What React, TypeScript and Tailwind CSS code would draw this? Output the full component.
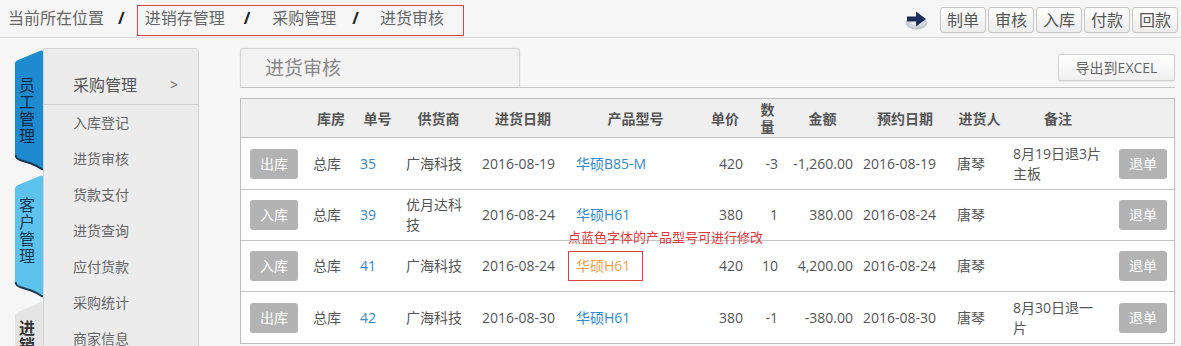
import React from "react";

type Row = {
  act: string;
  no: string;
  vendor: string;
  date: string;
  model: string;
  price: string;
  qty: string;
  amount: string;
  due: string;
  who: string;
  note: string;
  marked?: boolean;
};

const rows: Row[] = [
  { act: "出库", no: "35", vendor: "广海科技", date: "2016-08-19", model: "华硕B85-M", price: "420", qty: "-3", amount: "-1,260.00", due: "2016-08-19", who: "唐琴", note: "8月19日退3片主板" },
  { act: "入库", no: "39", vendor: "优月达科技", date: "2016-08-24", model: "华硕H61", price: "380", qty: "1", amount: "380.00", due: "2016-08-24", who: "唐琴", note: "" },
  { act: "入库", no: "41", vendor: "广海科技", date: "2016-08-24", model: "华硕H61", price: "420", qty: "10", amount: "4,200.00", due: "2016-08-24", who: "唐琴", note: "", marked: true },
  { act: "出库", no: "42", vendor: "广海科技", date: "2016-08-30", model: "华硕H61", price: "380", qty: "-1", amount: "-380.00", due: "2016-08-30", who: "唐琴", note: "8月30日退一片" },
];

const menuItems = ["入库登记", "进货审核", "货款支付", "进货查询", "应付货款", "采购统计", "商家信息"];
const quickButtons = ["制单", "审核", "入库", "付款", "回款"];

const cols =
  "grid grid-cols-[64px_47px_46px_76px_94px_132px_50px_35px_75px_88px_57px_103px_66px]";

function ArrowIcon() {
  return (
    <svg width="23" height="21" viewBox="0 0 23 21" aria-hidden="true">
      <defs>
        <radialGradient id="disk" cx="50%" cy="40%" r="60%">
          <stop offset="0%" stopColor="#ffffff" />
          <stop offset="100%" stopColor="#b9bec8" />
        </radialGradient>
      </defs>
      <ellipse cx="11.5" cy="14" rx="11" ry="6.5" fill="url(#disk)" />
      <path d="M2 7.5h9V2.5l10 7.5-10 7.5v-5H2z" fill="#1b2e5c" />
    </svg>
  );
}

function SideTab({
  label,
  fill,
  edge,
  text,
  height,
  pt,
  bold,
}: {
  label: string;
  fill: string;
  edge: string;
  text: string;
  height: number;
  pt: string;
  bold?: boolean;
}) {
  const h = height;
  return (
    <div className="relative w-[28px]" style={{ height: h }}>
      <svg className="absolute inset-0" width="28" height={h} viewBox={`0 0 28 ${h}`} aria-hidden="true">
        <path
          d={`M0 14 Q0 11 3 10 L26 0.6 Q28 0 28 2 V${h} Q24 ${h - 4} 16 ${h - 7} L4 ${h - 11} Q0 ${h - 12} 0 ${h - 15} Z`}
          fill={fill}
        />
        <path
          d={`M0.5 ${h - 15} Q1 ${h - 11} 5 ${h - 10} L16 ${h - 6.5} Q24 ${h - 3.5} 28 ${h}`}
          stroke={edge}
          strokeWidth="2"
          fill="none"
        />
      </svg>
      <div
        className={`relative flex flex-col pl-[4px] text-[16px] leading-[17px] ${pt} ${bold ? "font-bold" : ""}`}
        style={{ color: text }}
      >
        {label.split("").map((c, i) => (
          <span key={i}>{c}</span>
        ))}
      </div>
    </div>
  );
}

export default function App() {
  return (
    <div className="h-[346px] w-[1181px] overflow-hidden bg-[#f6f6f6] font-['Open_Sans','Noto_Sans_CJK_SC',sans-serif] text-[#555]">
      {/* top bar */}
      <div className="flex h-[38px] items-start justify-between border-b border-[#d8d8d8] pl-[8px] pr-[3px]">
        <div className="flex items-start text-[16px] leading-[22px] text-[#666]">
          <span className="mt-[7px]">当前所在位置</span>
          <span className="mt-[7px] ml-[14px] mr-[12px] font-bold text-[#222]">/</span>
          <div className="mt-[5px] flex h-[31px] items-start border border-[#d64545] pt-[1px] pl-[7px] pr-[19px]">
            <span>进销存管理</span>
            <span className="ml-[19px] mr-[22px] font-bold text-[#222]">/</span>
            <span>采购管理</span>
            <span className="ml-[16px] mr-[21px] font-bold text-[#222]">/</span>
            <span>进货审核</span>
          </div>
        </div>
        <div className="flex items-start">
          <div className="mt-[9px] mr-[12px]">
            <ArrowIcon />
          </div>
          <div className="mt-[7px] flex gap-[2px]">
            {quickButtons.map((b) => (
              <button
                key={b}
                type="button"
                className="h-[26px] rounded-[3px] border border-[#c6c6c6] bg-gradient-to-b from-white to-[#ececec] px-[6px] text-[16px] leading-[24px] text-[#555]"
              >
                {b}
              </button>
            ))}
          </div>
        </div>
      </div>

      <div className="flex items-start">
        {/* sidebar */}
        <div className="flex pl-[15px] pt-[10px]">
          <div className="mt-[2px] flex flex-col gap-[5px]">
            <SideTab label="员工管理" fill="#1d8bcd" edge="#16324f" text="#0c2947" height={120} pt="pt-[27px]" />
            <SideTab label="客户管理" fill="#5dc3ec" edge="#1d3a52" text="#163a58" height={122} pt="pt-[22px]" />
            <SideTab label="进销" fill="#e4e4e4" edge="#999" text="#333" height={70} pt="pt-[18px]" bold />
          </div>
          <div className="h-[300px] w-[156px] rounded-tr-[4px] border border-[#d2d2d2] bg-[#ececec]">
            <div className="flex h-[56px] items-start justify-between border-b border-[#d0d0d0] pt-[24px] pl-[29px] pr-[20px] text-[16px] leading-[24px] text-[#555]">
              <span>采购管理</span>
              <span className="text-[14px] text-[#666]">&gt;</span>
            </div>
            <div className="flex flex-col">
              {menuItems.map((m) => (
                <div key={m} className="flex h-[36px] items-center pl-[29px] text-[14px] leading-[20px] text-[#666]">
                  {m}
                </div>
              ))}
            </div>
          </div>
        </div>

        {/* main */}
        <div className="ml-[41px] w-[935px] pt-[10px]">
          <div className="flex h-[40px] items-start justify-between border-b border-[#c8c8c8]">
            <div className="flex h-[39px] w-[280px] items-center rounded-t-[4px] border border-b-0 border-[#d4d4d4] bg-[#f3f3f3] pl-[24px] text-[19px] text-[#888] shadow-[0_0_2px_rgba(0,0,0,0.08)]">
              进货审核
            </div>
            <button
              type="button"
              className="mt-[6px] h-[27px] w-[117px] rounded-[2px] border border-[#d0d0d0] bg-gradient-to-b from-white to-[#f0f0f0] text-[14px] leading-[25px] text-[#666] shadow-[0_1px_1px_rgba(0,0,0,0.06)]"
            >
              导出到EXCEL
            </button>
          </div>

          <div className="relative mt-[10px] border border-[#bdbdbd] bg-white">
            <div className={`${cols} h-[39px] items-center border-b border-[#c4c4c4] bg-[#efefef] text-[14px] font-bold leading-[17px] text-[#555]`}>
              <div />
              <div className="pl-[5px] text-center">库房</div>
              <div className="pl-[5px] text-center">单号</div>
              <div className="pl-[5px] text-center">供货商</div>
              <div className="pl-[4px] text-center">进货日期</div>
              <div className="pl-[3px] text-center">产品型号</div>
              <div className="text-center">单价</div>
              <div className="px-[7px] text-center">数量</div>
              <div className="text-center">金额</div>
              <div className="pl-[2px] text-center">预约日期</div>
              <div className="pl-[6px] text-center">进货人</div>
              <div className="pl-[3px] text-center">备注</div>
              <div />
            </div>

            {rows.map((r, i) => (
              <div
                key={r.no}
                className={`${cols} items-center text-[14px] leading-[20px] text-[#555] ${i === 0 ? "h-[52px]" : "h-[51px]"} ${i < rows.length - 1 ? "border-b border-[#c4c4c4]" : ""}`}
              >
                <div className="pl-[9px]">
                  <button type="button" className="h-[30px] w-[48px] rounded-[3px] bg-[#b3b3b3] text-[14px] text-white">
                    {r.act}
                  </button>
                </div>
                <div className="pl-[8px]">总库</div>
                <div className="pl-[8px] text-[#3189cf]">{r.no}</div>
                <div className="pl-[8px] pr-[8px]">{r.vendor}</div>
                <div className="pl-[8px]">{r.date}</div>
                <div className="pl-[8px]">
                  {r.marked ? (
                    <span className="-ml-[8px] inline-block h-[30px] border border-[#d94040] pl-[7px] pr-[12px] leading-[28px] text-[#f0a04a]">
                      {r.model}
                    </span>
                  ) : (
                    <span className="text-[#3189cf]">{r.model}</span>
                  )}
                </div>
                <div className="pr-[7px] text-right">{r.price}</div>
                <div className="pr-[7px] text-right">{r.qty}</div>
                <div className="pr-[7px] text-right">{r.amount}</div>
                <div className="pl-[3px]">{r.due}</div>
                <div className="pl-[9px]">{r.who}</div>
                <div className="pl-[8px] pr-[5px]">{r.note}</div>
                <div className="pl-[11px]">
                  <button type="button" className="h-[30px] w-[48px] rounded-[3px] bg-[#b3b3b3] text-[14px] text-white">
                    退单
                  </button>
                </div>
              </div>
            ))}

            <div className="absolute left-[327px] top-[130px] text-[13px] leading-[16px] text-[#e0373a]">
              点蓝色字体的产品型号可进行修改
            </div>
          </div>
        </div>
      </div>
    </div>
  );
}
